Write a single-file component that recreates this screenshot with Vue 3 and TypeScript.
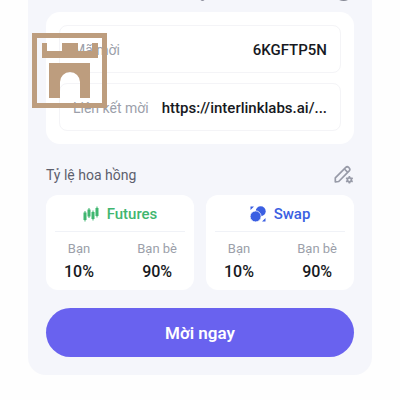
<script setup lang="ts">
interface Field {
  label: string
  value: string
}

interface Rate {
  kind: 'futures' | 'swap'
  name: string
  you: string
  friend: string
}

const fields: Field[] = [
  { label: 'Mã mời', value: '6KGFTP5N' },
  { label: 'Liên kết mời', value: 'https://interlinklabs.ai/...' },
]

const rates: Rate[] = [
  { kind: 'futures', name: 'Futures', you: '10%', friend: '90%' },
  { kind: 'swap', name: 'Swap', you: '10%', friend: '90%' },
]
</script>

<template>
  <main class="panel">
    <svg class="header-edge" viewBox="0 0 309 12" preserveAspectRatio="xMaxYMin meet" aria-hidden="true">
      <path d="M155 0h4q-1 1-2 1t-2-1z" fill="#8b8d9a" />
      <path d="M294 0h9q-4 2-9 0z" fill="#858894" />
    </svg>

    <dl class="fields">
      <div v-for="field in fields" :key="field.label" class="field">
        <dt>{{ field.label }}</dt>
        <dd>{{ field.value }}</dd>
      </div>
    </dl>

    <div class="section-head">
      <h2>Tỷ lệ hoa hồng</h2>
      <button type="button" class="edit" aria-label="Tỷ lệ hoa hồng">
        <svg viewBox="0 0 20 20" fill="none" stroke="#989ba8" stroke-width="1.7" stroke-linejoin="round">
          <path d="M1.3 16.9v-4L11.8 2.4q1.4-1.3 2.8 0l.6.6q1.3 1.4 0 2.8L4.7 16.5z" />
          <path d="M10.4 4l3.2 3.2" />
          <circle cx="15.4" cy="14.8" r="2" />
          <path d="M15.4 11v1.8m0 4v1.8M12.1 12.9l1.6.9m3.4 2l1.6.9M12.1 16.7l1.6-.9m3.4-2l1.6-.9" />
        </svg>
      </button>
    </div>

    <div class="rates">
      <section v-for="rate in rates" :key="rate.kind" class="rate">
        <h3 :class="rate.kind">
          <svg v-if="rate.kind === 'futures'" viewBox="0 0 16 16" fill="currentColor" aria-hidden="true">
            <path d="M1.5 5h1v1.5h1V14h-1v1.5h-1V14h-1V6.5h1zM5.5 2h1v1.5h1v7h-1V12h-1v-1.5h-1v-7h1zM9.5 4.5h1V6h1v7h-1v1.5h-1V13h-1V6h1zM13.5.5h1V2h1v8h-1v1.5h-1V10h-1V2h1z" />
          </svg>
          <svg v-else viewBox="0 0 16 16" fill="currentColor" aria-hidden="true">
            <circle cx="10.7" cy="5.3" r="5" />
            <circle cx="5.6" cy="10.4" r="5.5" stroke="#fff" stroke-width=".8" />
            <path d="M.5.5H4L.5 4zM15.5 12v3.5H12z" />
          </svg>
          {{ rate.name }}
        </h3>
        <dl class="split">
          <div>
            <dt>Bạn</dt>
            <dd>{{ rate.you }}</dd>
          </div>
          <div>
            <dt>Bạn bè</dt>
            <dd>{{ rate.friend }}</dd>
          </div>
        </dl>
      </section>
    </div>

    <button type="button" class="invite">Mời ngay</button>

    <svg class="emblem" viewBox="0 0 75 75" fill="#bd9d7e" aria-hidden="true">
      <path fill-rule="evenodd" d="M0 0h75v75H0zM5 5v65h65V5z" />
      <path d="M10 10h5v8h15v-8h16v8h14v-8h6v15H10z" />
      <path d="M17 30h41v35H48V49a10 10 0 0 0-20 0v16H17z" />
    </svg>
  </main>
</template>

<style>
body {
  background: #fefefe;
}
</style>

<style scoped>
* {
  box-sizing: border-box;
}

.panel {
  position: relative;
  margin: 0 28px;
  padding: 0 18px 18px;
  border-radius: 0 0 18px 18px;
  background: #f5f6fb;
  color: #171922;
  font-family: Roboto, "Noto Sans", sans-serif;
}

h2,
h3,
dl,
dt,
dd {
  margin: 0;
}

button {
  padding: 0;
  border: 0;
  font-family: inherit;
}

.header-edge {
  display: block;
  width: 100%;
  height: 12px;
}

.fields {
  display: grid;
  gap: 10px;
  padding: 13px;
  border-radius: 14px;
  background: #fff;
}

.field {
  display: flex;
  align-items: center;
  justify-content: space-between;
  height: 48px;
  padding: 2px 13px 0;
  border: 1px solid #f4f4f7;
  border-radius: 8px;
  font-size: 14px;
  white-space: nowrap;
}

.field dt {
  color: #9c9faa;
}

.field dd {
  font-size: 15px;
  font-weight: 500;
}

.section-head {
  display: flex;
  align-items: center;
  justify-content: space-between;
  height: 51px;
  padding-top: 10px;
}

.section-head h2 {
  color: #5d606d;
  font-size: 14px;
  font-weight: 400;
}

.edit {
  display: flex;
  background: none;
}

.edit svg {
  width: 20px;
  height: 20px;
}

.rates {
  display: grid;
  grid-template-columns: 1fr 1fr;
  gap: 12px;
}

.rate {
  height: 95px;
  padding: 0 9px;
  border-radius: 12px;
  background: #fff;
}

.rate h3 {
  display: flex;
  align-items: center;
  justify-content: center;
  gap: 8px;
  height: 37px;
  padding-top: 2px;
  border-bottom: 1px solid #f0f2f7;
  font-size: 15px;
  font-weight: 500;
}

.rate h3 svg {
  width: 16px;
  height: 16px;
}

.futures {
  color: #3fb66f;
}

.swap {
  color: #3b5fe2;
}

.split {
  display: flex;
  justify-content: space-between;
  padding: 7px 8px 0 9px;
  text-align: center;
}

.split dt {
  color: #9c9faa;
  font-size: 13px;
  line-height: 20px;
}

.split dd {
  font-size: 16px;
  font-weight: 500;
  line-height: 26px;
}

.invite {
  display: block;
  width: 100%;
  height: 49px;
  margin-top: 18px;
  border-radius: 25px;
  background: #6962ef;
  color: #fff;
  font-size: 17px;
  font-weight: 600;
}

.emblem {
  position: absolute;
  top: 33px;
  left: 4px;
  width: 75px;
  height: 75px;
}
</style>
